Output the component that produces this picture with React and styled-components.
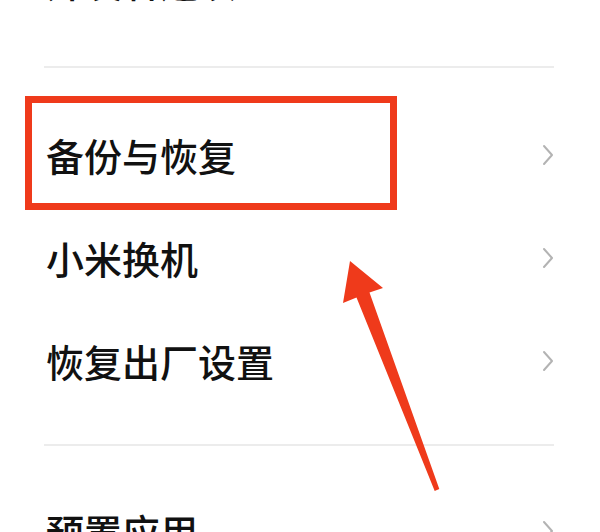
import React from 'react'
import styled, { createGlobalStyle } from 'styled-components'

const GlobalStyle = createGlobalStyle`
  html, body {
    margin: 0;
    padding: 0;
    background: #fff;
    overflow: hidden;
  }
  body {
    font-family: "Noto Sans CJK SC", "Noto Sans", sans-serif;
  }
`;

const Page = styled.div`
  position: relative;
  width: 600px;
  height: 532px;
  overflow: hidden;
  background: #fff;
`;

const Group = styled.div`
  display: flex;
  flex-direction: column;
  margin-top: ${({ $top }) => $top}px;
`;

const Row = styled.div`
  position: relative;
  display: flex;
  align-items: center;
  justify-content: space-between;
  height: 103px;
  padding: 0 46px 0 46px;
`;

const Label = styled.span`
  font-size: 38px;
  font-weight: 500;
  color: #111;
  line-height: 1;
`;

const Divider = styled.div`
  height: 2px;
  margin: ${({ $top }) => $top}px 46px 0 44px;
  background: #ececec;
`;

const Highlight = styled.div`
  position: absolute;
  left: 25px;
  top: -7px;
  width: 372px;
  height: 114px;
  box-sizing: border-box;
  border: 7px solid #ef3a1b;
  pointer-events: none;
`;

const ArrowLayer = styled.svg`
  position: absolute;
  left: 0;
  top: 0;
  width: 600px;
  height: 532px;
  pointer-events: none;
`;

const Chevron = () => (
  <svg width="12" height="22" viewBox="0 0 12 22">
    <polyline points="2,2 10,11 2,20" fill="none" stroke="#b3b3b3" strokeWidth="2" strokeLinecap="round" strokeLinejoin="round" />
  </svg>
);

const Item = ({ label, children }) => (
  <Row>
    {children}
    <Label>{label}</Label>
    <Chevron />
  </Row>
);

export default function App() {
  return (
    <Page>
      <GlobalStyle />
      <Group $top={-71}>
        <Item label="开发者选项" />
      </Group>
      <Divider $top={34} />
      <Group $top={35}>
        <Item label="备份与恢复">
          <Highlight />
        </Item>
        <Item label="小米换机" />
        <Item label="恢复出厂设置" />
      </Group>
      <Divider $top={32} />
      <Group $top={33}>
        <Item label="预置应用" />
      </Group>
      <ArrowLayer viewBox="0 0 600 532">
        <polygon
          points="350,261 383,288 369.5,292.5 439.3,489.1 434.7,490.9 356.5,297.5 343,303"
          fill="#ef3a1b"
        />
      </ArrowLayer>
    </Page>
  );
}
